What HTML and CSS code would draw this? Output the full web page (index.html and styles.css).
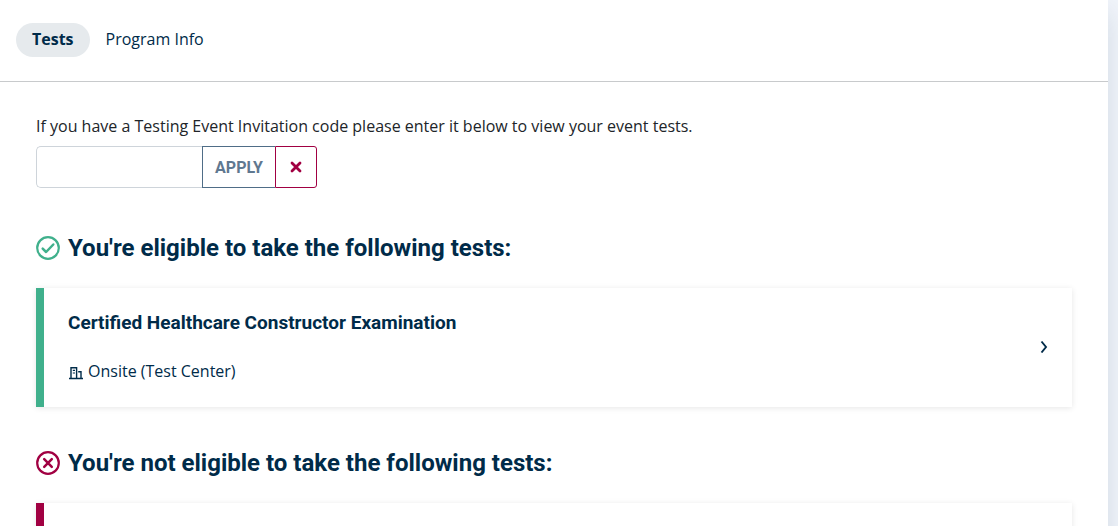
FILE: index.html
```
<!DOCTYPE html>
<html lang="en">

<head>
    <meta charset="UTF-8">
    <meta name="viewport" content="width=device-width, initial-scale=1.0">
    <title>Tests</title>
    <link rel="stylesheet" href="styles.css">
</head>

<body>
    <div class="panel">
        <nav class="tabs">
            <a class="tab active" href="#tests">Tests</a>
            <a class="tab" href="#program-info">Program Info</a>
        </nav>

        <main class="content">
            <form class="event-form">
                <label for="event-code">If you have a Testing Event Invitation code please enter it below to view your event tests.</label>
                <div class="input-group">
                    <input id="event-code" type="text">
                    <button class="btn-apply" type="button">APPLY</button>
                    <button class="btn-clear" type="button" aria-label="Clear">
                        <svg width="12" height="12" viewBox="0 0 12 12">
                            <path d="M2 2l8 8M10 2l-8 8" fill="none" stroke="currentColor" stroke-width="2.8" stroke-linecap="round" />
                        </svg>
                    </button>
                </div>
            </form>

            <section class="group eligible">
                <h2>
                    <svg class="status" width="24" height="24" viewBox="0 0 24 24" fill="none" stroke="currentColor" stroke-width="2.2" stroke-linecap="round" stroke-linejoin="round">
                        <circle cx="12" cy="12" r="10.8" />
                        <path d="M6.7 12.7l3.4 3.3 7.2-7.5" stroke-width="2.5" />
                    </svg>
                    You're eligible to take the following tests:
                </h2>
                <a class="card" href="#chc">
                    <div class="card-body">
                        <h3>Certified Healthcare Constructor Examination</h3>
                        <p class="place">
                            <svg width="16" height="18" viewBox="0 0 16 18" fill="none" stroke="currentColor" stroke-width="1.4">
                                <path d="M1 16.5h14M3 16.5V5.7h5.6v10.8M10.2 9.7H13v6.8" />
                                <path d="M4.8 8.4H7M4.800 11H7" stroke-width="1.2" />
                            </svg>
                            Onsite (Test Center)
                        </p>
                    </div>
                    <svg class="arrow" width="8" height="14" viewBox="0 0 8 14">
                        <path d="M1.5 2.5L6 8l-4.500 5.500" fill="none" stroke="currentColor" stroke-width="1.9" />
                    </svg>
                </a>
            </section>

            <section class="group not-eligible">
                <h2>
                    <svg class="status" width="24" height="24" viewBox="0 0 24 24" fill="none" stroke="currentColor" stroke-width="2.2" stroke-linecap="round">
                        <circle cx="12" cy="12" r="10.8" />
                        <path d="M8.2 8.2l7.6 7.6M15.8 8.2l-7.6 7.6" stroke-width="2.5" />
                    </svg>
                    You're not eligible to take the following tests:
                </h2>
                <div class="card"></div>
            </section>
        </main>
    </div>
</body>

</html>
```

FILE: styles.css
```
* {
    box-sizing: border-box;
}

html {
    overflow-x: hidden;
    scrollbar-width: none;
}

body {
    margin: 0;
    background: #f0f4fa;
    color: #002b49;
    font-family: "Open Sans", sans-serif;
    font-size: 16px;
    line-height: 24px;
}

h2,
h3,
p {
    margin: 0;
}

a {
    color: inherit;
    text-decoration: none;
}

.panel {
    min-height: 100vh;
    margin-right: 10px;
    background: #fff;
    box-shadow: 0 12px 24px rgba(0, 43, 73, 0.12);
}

.tabs {
    display: flex;
    padding: 23px 16px 24px;
    border-bottom: 1px solid #c8cacc;
}

.tab {
    padding: 4px 16px 6px;
    border-radius: 17px;
}

.tab.active {
    background: #e6eaed;
    font-weight: 700;
}

.content {
    padding: 32px 36px;
}

.event-form {
    margin-bottom: 44px;
}

.event-form label {
    display: block;
    margin-bottom: 8px;
    color: #212529;
}

.input-group {
    display: flex;
    height: 42px;
}

.input-group input {
    width: 166px;
    padding: 8px 12px;
    border: 1px solid #ced4da;
    border-right: 0;
    border-radius: 5px 0 0 5px;
    font: inherit;
}

.input-group button {
    display: flex;
    align-items: center;
    justify-content: center;
    padding: 0;
    background: #fff;
    font: 700 16px Roboto, sans-serif;
}

.btn-apply {
    width: 73px;
    border: 1px solid #4f6d87;
    border-right: 0;
    color: #5f7890;
}

.input-group .btn-clear {
    width: 42px;
    border: 1px solid #a10042;
    border-radius: 0 3px 3px 0;
    color: #a10042;
}

.group {
    margin-bottom: 40px;
}

.group h2 {
    display: flex;
    align-items: center;
    gap: 8px;
    margin-bottom: 24px;
    font: 700 24px/32px Roboto, sans-serif;
}

.eligible .status {
    color: #40b08c;
}

.not-eligible .status {
    color: #a10042;
}

.card {
    display: flex;
    align-items: center;
    justify-content: space-between;
    min-height: 119px;
    padding: 20px 24px 24px;
    border-left: 8px solid #40b08c;
    box-shadow: 0 1px 6px rgba(0, 0, 0, 0.1);
}

.not-eligible .card {
    border-color: #a10042;
}

.card h3 {
    margin-bottom: 22px;
    font: 700 19px/28px Roboto, sans-serif;
}

.place {
    display: flex;
    align-items: center;
    gap: 4px;
}
```
